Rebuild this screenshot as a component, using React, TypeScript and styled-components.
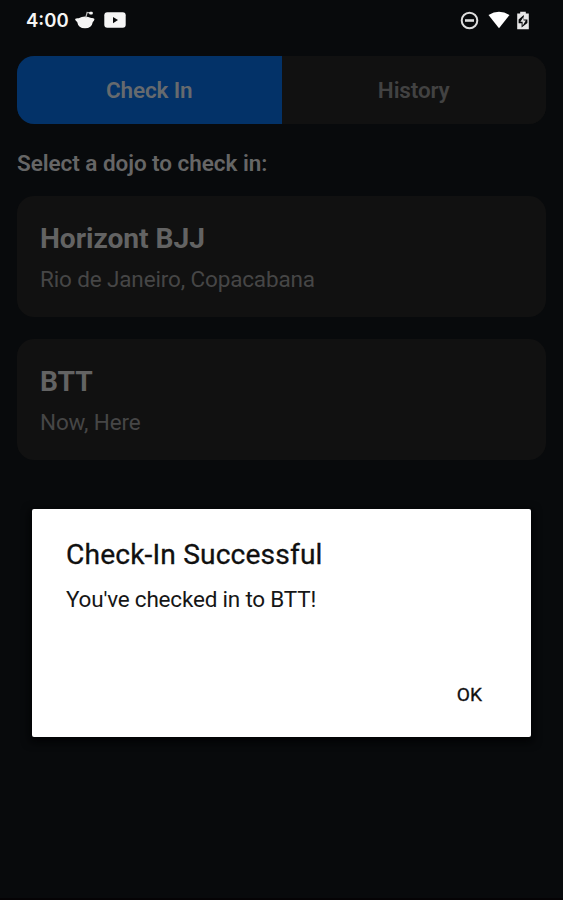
import React from "react";
import styled, { createGlobalStyle } from "styled-components";

const GlobalStyle = createGlobalStyle`
  * { box-sizing: border-box; }
  body {
    margin: 0;
    background: #080a0c;
    font-family: Roboto, "Liberation Sans", sans-serif;
  }
`;

const Screen = styled.div`
  position: relative;
  width: 563px;
  height: 900px;
  overflow: hidden;
  background: #080a0c;
  border-bottom: 2px solid #050305;
`;

const StatusBar = styled.header`
  display: flex;
  justify-content: space-between;
  height: 40px;
  padding: 0 33px 0 26px;
  color: #f5f5f5;
`;

const StatusGroup = styled.div`
  display: flex;
  align-items: center;
`;

const Clock = styled.span`
  width: 49px;
  font-family: Inter, sans-serif;
  font-size: 18.5px;
  font-weight: 600;
  line-height: 40px;
  letter-spacing: 0;
`;

const Icon = styled.svg<{ $gap?: number }>`
  display: block;
  flex: none;
  margin-left: ${({ $gap = 0 }) => $gap}px;
`;

const Content = styled.main`
  display: flex;
  flex-direction: column;
  padding: 16px 17px 0;
`;

const Tabs = styled.nav`
  display: flex;
  height: 68px;
  border-radius: 17px;
  overflow: hidden;
  background: #111111;
`;

const Tab = styled.button<{ $active?: boolean }>`
  flex: 1;
  padding: 0;
  border: 0;
  background: ${({ $active }) => ($active ? "#033268" : "#111111")};
  color: ${({ $active }) => ($active ? "#666a6e" : "#424242")};
  font-family: inherit;
  font-size: 22.5px;
  font-weight: 600;
  letter-spacing: -0.15px;
  line-height: 28px;
`;

const Prompt = styled.h2`
  margin: 25px 0 19px;
  color: #666666;
  font-size: 22.5px;
  font-weight: 600;
  letter-spacing: -0.05px;
  line-height: 28px;
`;

const DojoList = styled.div`
  display: flex;
  flex-direction: column;
  gap: 22px;
`;

const DojoCard = styled.article`
  height: 121px;
  padding: 25px 23px 0;
  border-radius: 17px;
  background: #111111;
`;

const DojoName = styled.h3`
  margin: 0;
  color: #636363;
  font-size: 28.2px;
  font-weight: 700;
  letter-spacing: -0.05px;
  line-height: 36px;
`;

const DojoPlace = styled.p`
  margin: 8px 0 0;
  color: #464646;
  font-size: 22.5px;
  letter-spacing: -0.14px;
  line-height: 28px;
`;

const Dialog = styled.section`
  position: absolute;
  top: 509px;
  left: 32px;
  display: flex;
  flex-direction: column;
  width: 499px;
  height: 228px;
  padding: 28px 34px 0;
  border-radius: 2px;
  background: #ffffff;
  box-shadow: 0 3px 9px 2px #020304;
`;

const DialogTitle = styled.h1`
  margin: 0;
  color: #101010;
  font-size: 28.2px;
  font-weight: 400;
  letter-spacing: 0.14px;
  line-height: 36px;
  -webkit-text-stroke: 0.3px #101010;
`;

const DialogMessage = styled.p`
  margin: 12px 0 0;
  color: #161616;
  font-size: 22.5px;
  letter-spacing: -0.2px;
  line-height: 28px;
`;

const DialogAction = styled.button`
  align-self: flex-end;
  margin: 69px 15px 0 0;
  padding: 0;
  border: 0;
  background: none;
  color: #111111;
  font-family: inherit;
  font-size: 19.2px;
  font-weight: 400;
  line-height: 26px;
  -webkit-text-stroke: 0.3px #111111;
`;

const dojos = [
  { name: "Horizont BJJ", place: "Rio de Janeiro, Copacabana" },
  { name: "BTT", place: "Now, Here" },
];

const BowlIcon = () => (
  <Icon width="20" height="20" viewBox="0 0 20 20" fill="#f5f5f5">
    <path d="M0 9Q1.6 7.8 3.7 8.3Q6.6 6.6 10 6.6Q13.4 6.6 16.2 8.1Q18.1 7.6 19.5 9.1Q19.2 11 17.8 11.9Q16.7 18.3 10 18.3Q3.3 18.3 2.2 11.9Q0.5 11.2 0 9Z" />
    <path d="M10.8 7.5L12.1 2.5L16.1 3.1" fill="none" stroke="#b8b8b8" strokeWidth="1.2" />
    <rect x="14.2" y="1.8" width="3.6" height="2.8" rx="1" />
  </Icon>
);

const VideoIcon = () => (
  <Icon $gap={9} width="22" height="16" viewBox="0 0 22 16">
    <rect x="0.3" y="0.3" width="21.4" height="15.4" rx="3" fill="#f5f5f5" />
    <path d="M9 5V11.3L14 8.1Z" fill="#080a0c" />
  </Icon>
);

const DoNotDisturbIcon = () => (
  <Icon width="19" height="19" viewBox="0 0 19 19" fill="none" stroke="#dedede" strokeWidth="2">
    <circle cx="9.5" cy="9.5" r="7.8" />
    <path d="M5 9.5H14" strokeWidth="2.6" />
  </Icon>
);

const WifiIcon = () => (
  <Icon $gap={9} width="22" height="18" viewBox="0 0 22 18">
    <path d="M0.5 4Q11 -2.5 21.5 4L11 17.2Z" fill="#ffffff" />
  </Icon>
);

const BatteryIcon = () => (
  <Icon $gap={6} width="14" height="19" viewBox="0 0 14 19">
    <path d="M4.2 0.8H9.8V2.6H12.8V18.2H1.2V2.6H4.2Z" fill="#e8e8e8" />
    <path d="M7.8 4L2.6 8.4V12.2H5.6V16.6L11.4 12V8.4H7.8Z" fill="#080a0c" />
    <path d="M7.6 5.8L4.4 10.8H6.6V14.8L9.8 9.6H7.6Z" fill="#e8e8e8" />
  </Icon>
);

export default function App() {
  return (
    <>
      <GlobalStyle />
      <Screen>
        <StatusBar>
          <StatusGroup>
            <Clock>4:00</Clock>
            <BowlIcon />
            <VideoIcon />
          </StatusGroup>
          <StatusGroup>
            <DoNotDisturbIcon />
            <WifiIcon />
            <BatteryIcon />
          </StatusGroup>
        </StatusBar>
        <Content>
          <Tabs>
            <Tab $active>Check In</Tab>
            <Tab>History</Tab>
          </Tabs>
          <Prompt>Select a dojo to check in:</Prompt>
          <DojoList>
            {dojos.map((dojo) => (
              <DojoCard key={dojo.name}>
                <DojoName>{dojo.name}</DojoName>
                <DojoPlace>{dojo.place}</DojoPlace>
              </DojoCard>
            ))}
          </DojoList>
        </Content>
        <Dialog role="dialog">
          <DialogTitle>Check-In Successful</DialogTitle>
          <DialogMessage>You've checked in to BTT!</DialogMessage>
          <DialogAction>OK</DialogAction>
        </Dialog>
      </Screen>
    </>
  );
}
